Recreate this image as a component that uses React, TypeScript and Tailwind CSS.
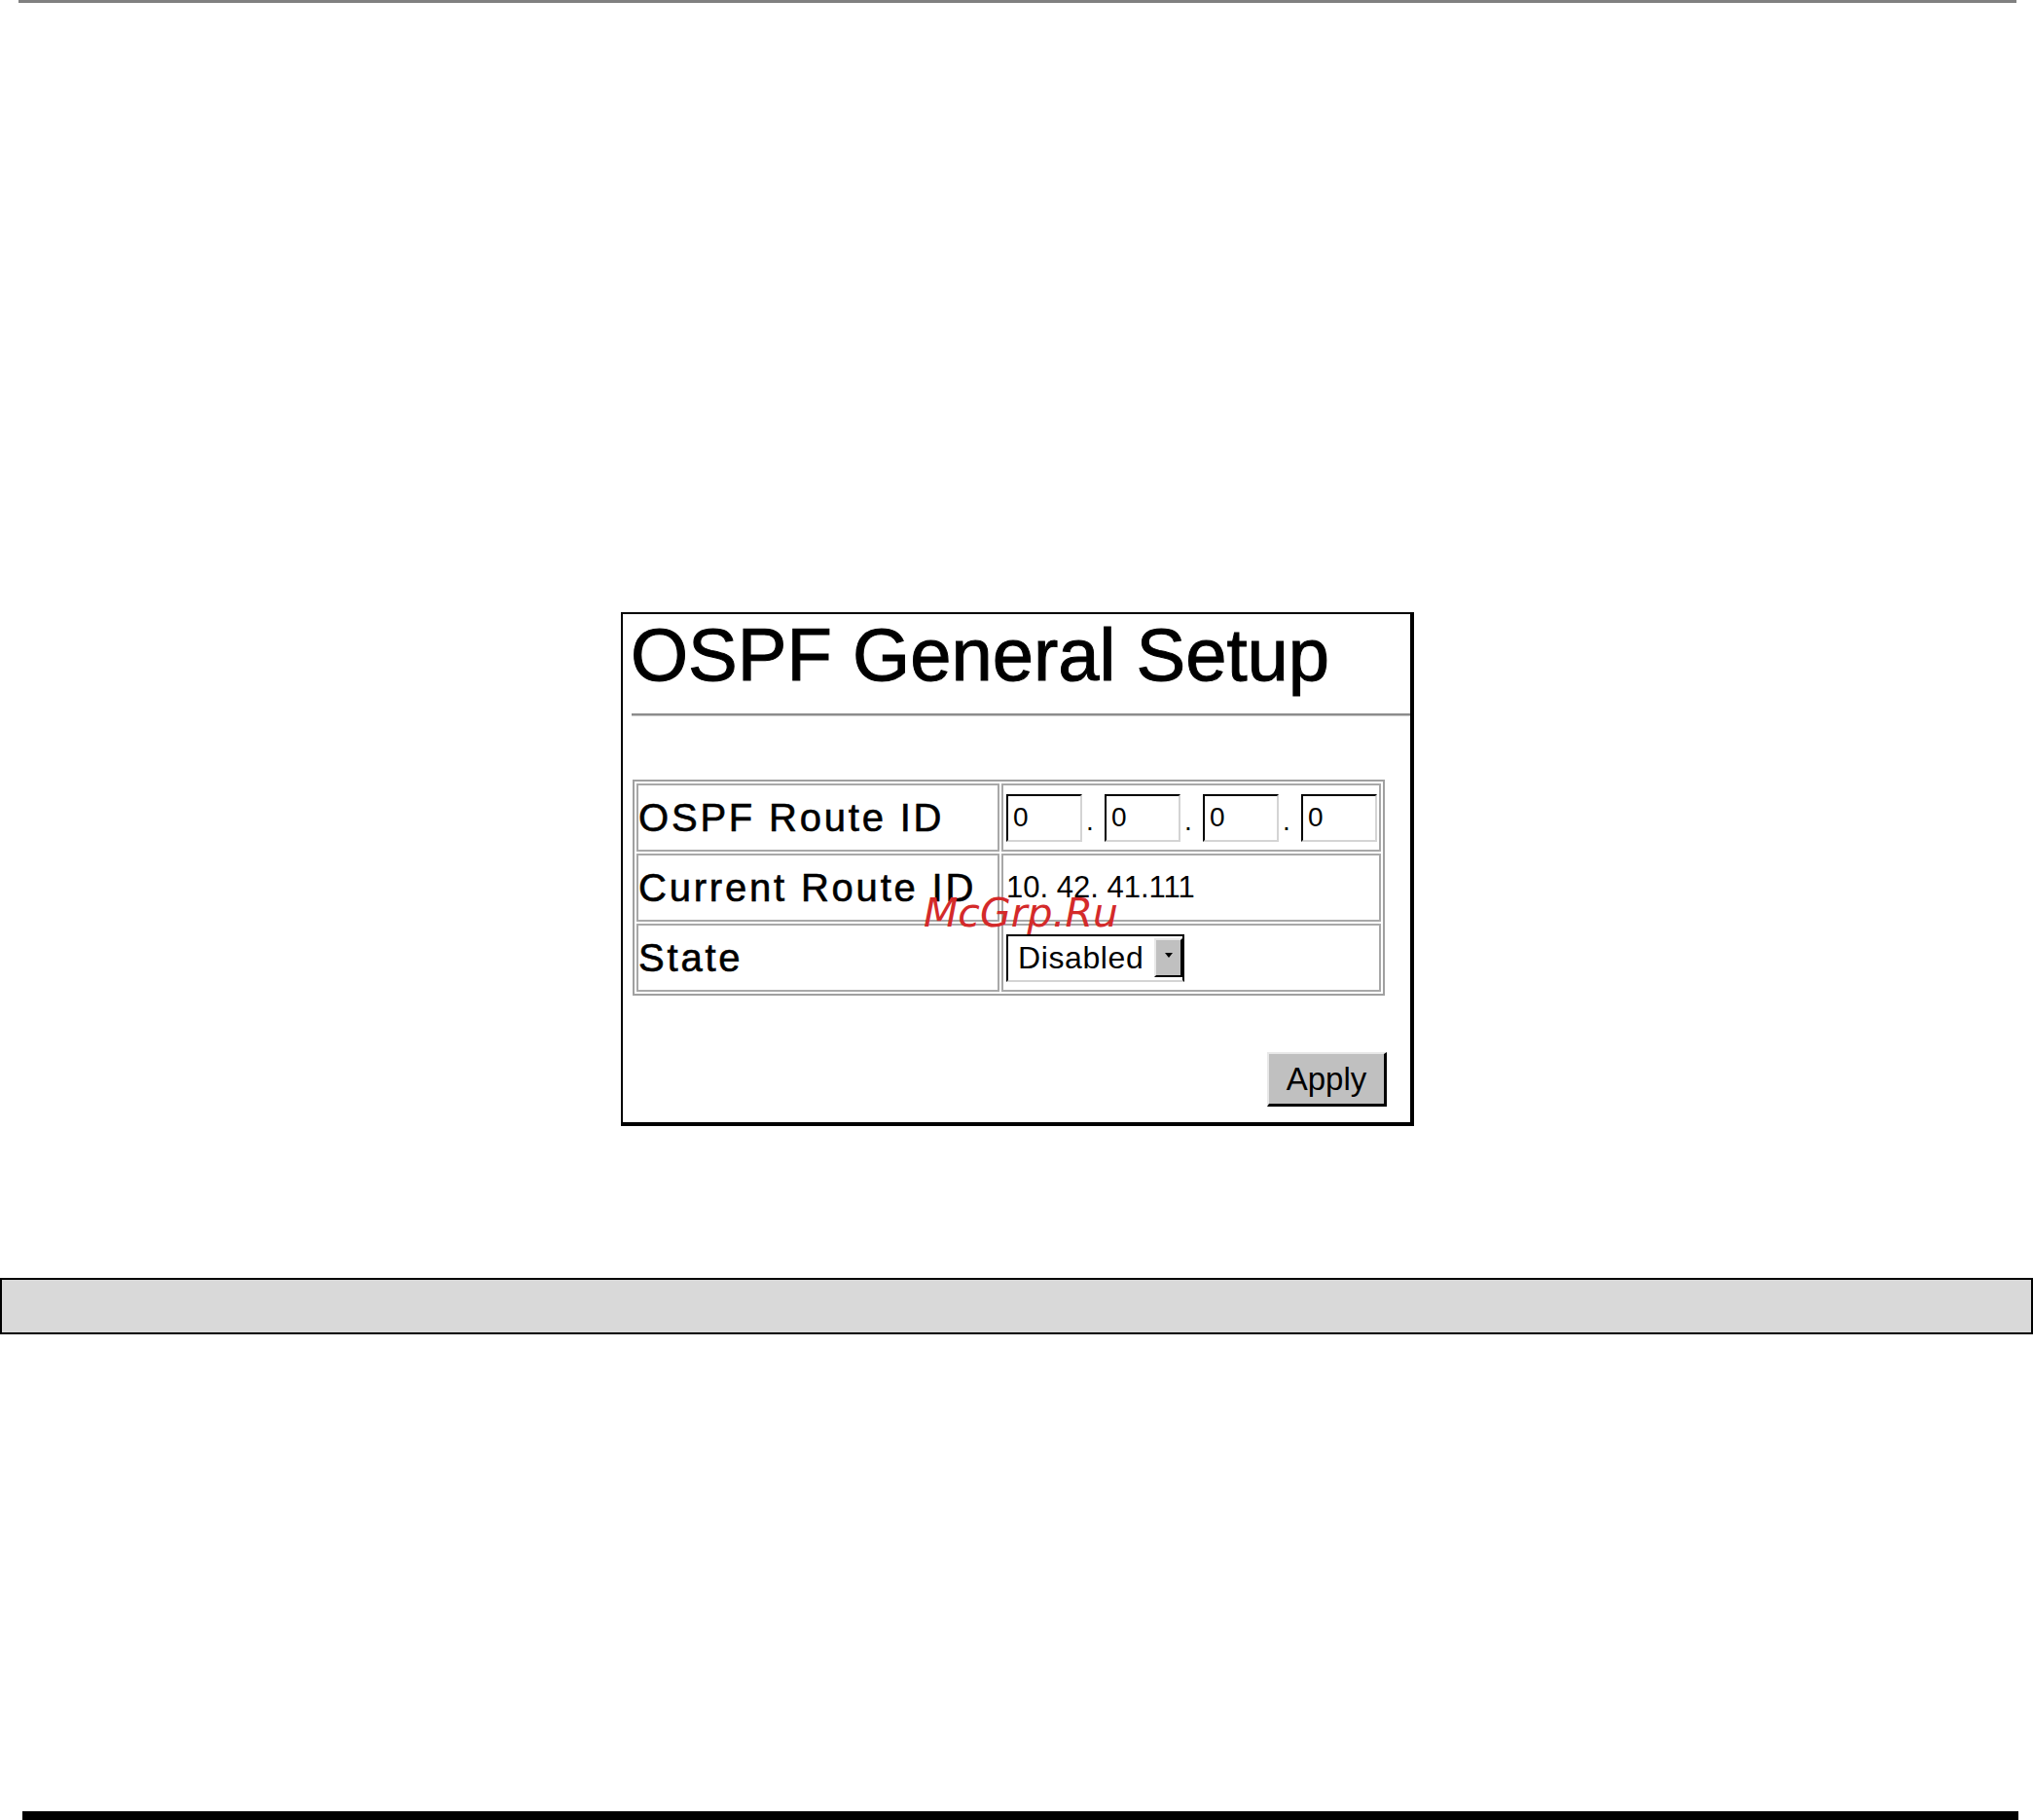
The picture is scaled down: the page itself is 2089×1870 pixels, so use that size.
import { useState } from 'react';

const FONT = { fontFamily: '"Liberation Sans", Arial, sans-serif' };

function OctetInput({ value, onChange }: { value: string; onChange: (v: string) => void }) {
  return (
    <input
      value={value}
      onChange={e => onChange(e.target.value)}
      className="w-[78px] h-[49px] align-middle bg-white text-black text-[28px] pl-[5px] outline-none border-2 border-t-black border-l-black border-r-[#d4d4d4] border-b-[#d4d4d4]"
      style={FONT}
    />
  );
}

function StateSelect({ value }: { value: string }) {
  return (
    <div className="inline-flex items-center w-[183px] h-[49px] align-middle bg-white border-2 border-t-black border-l-black border-r-black border-b-[#d4d4d4]">
      <span className="flex-1 pl-[10px] text-[32px] leading-none text-black tracking-[0.6px]">{value}</span>
      <span className="flex items-start justify-center pt-[13px] w-[29px] h-[40px] bg-[#c0c0c0] border-2 border-t-[#e8e8e8] border-l-[#e8e8e8] border-r-black border-b-black">
        <svg width="10" height="6" viewBox="0 0 10 6"><path d="M1 0h8L5 5z" fill="#000" /></svg>
      </span>
    </div>
  );
}

const label = 'h-[70px] border-2 border-[#a8a8a8] align-middle text-[40px] tracking-[2.8px] text-black [-webkit-text-stroke:0.6px_black]';
const value = 'h-[70px] border-2 border-[#a8a8a8] align-middle pl-[3px] text-black';

export default function App() {
  const [octets, setOctets] = useState(['0', '0', '0', '0']);

  const setOctet = (i: number, v: string) => setOctets(o => o.map((x, j) => (j === i ? v : x)));

  return (
    <div className="w-[2089px] h-[1870px] bg-white flex flex-col" style={FONT}>
      {/* top rule */}
      <div className="ml-[19px] w-[2053px] h-[3px] bg-[#808080]" />

      {/* panel */}
      <div className="relative ml-[638px] mt-[626px] w-[815px] h-[528px] flex flex-col border-l-2 border-t-2 border-r-4 border-b-4 border-black bg-white">
        <h1 className="pl-[8px] pt-[4px] text-[76px] leading-[75px] text-black font-normal [-webkit-text-stroke:1px_black]">OSPF General Setup</h1>
        <div className="ml-[9px] mt-[23px] border-t-2 border-[#8c8c8c] border-b border-b-[#c8c8c8]" />

        <table className="ml-[10px] mt-[65px] w-[773px] table-fixed border-separate border-spacing-[2px] border-2 border-[#a0a0a0]">
          <tbody>
            <tr>
              <td className={`w-[373px] ${label}`}>OSPF Route ID</td>
              <td className={`${value} text-[28px] whitespace-nowrap`}>
                {octets.map((v, i) => (
                  <span key={i}>
                    <OctetInput value={v} onChange={nv => setOctet(i, nv)} />
                    {i < 3 && <span className="inline-block w-[23px] pl-[4px] align-bottom">.</span>}
                  </span>
                ))}
              </td>
            </tr>
            <tr>
              <td className={label}>Current Route ID</td>
              <td className={`${value} text-[31px]`}>10. 42. 41.111</td>
            </tr>
            <tr>
              <td className={label}>State</td>
              <td className={value}>
                <StateSelect value="Disabled" />
              </td>
            </tr>
          </tbody>
        </table>

        <div className="flex justify-end mt-[58px] mr-[24px]">
          <button className="w-[123px] h-[56px] bg-[#c0c0c0] text-[33px] text-black border-2 border-t-[#e8e8e8] border-l-[#e8e8e8] border-r-[3px] border-b-[3px] border-r-black border-b-black">
            Apply
          </button>
        </div>

        {/* watermark */}
        <span
          className="absolute left-[309px] top-[287px] text-[41px] leading-[41px] italic text-[#d42a2a] pointer-events-none"
          style={{ fontFamily: '"DejaVu Sans", sans-serif' }}
        >
          McGrp.Ru
        </span>
      </div>

      {/* caption bar */}
      <div className="mt-[156px] w-[2089px] h-[58px] bg-[#d9d9d9] border-2 border-black" />

      {/* bottom rule */}
      <div className="ml-[23px] mt-[490px] w-[2051px] h-[9px] bg-black" />
    </div>
  );
}
